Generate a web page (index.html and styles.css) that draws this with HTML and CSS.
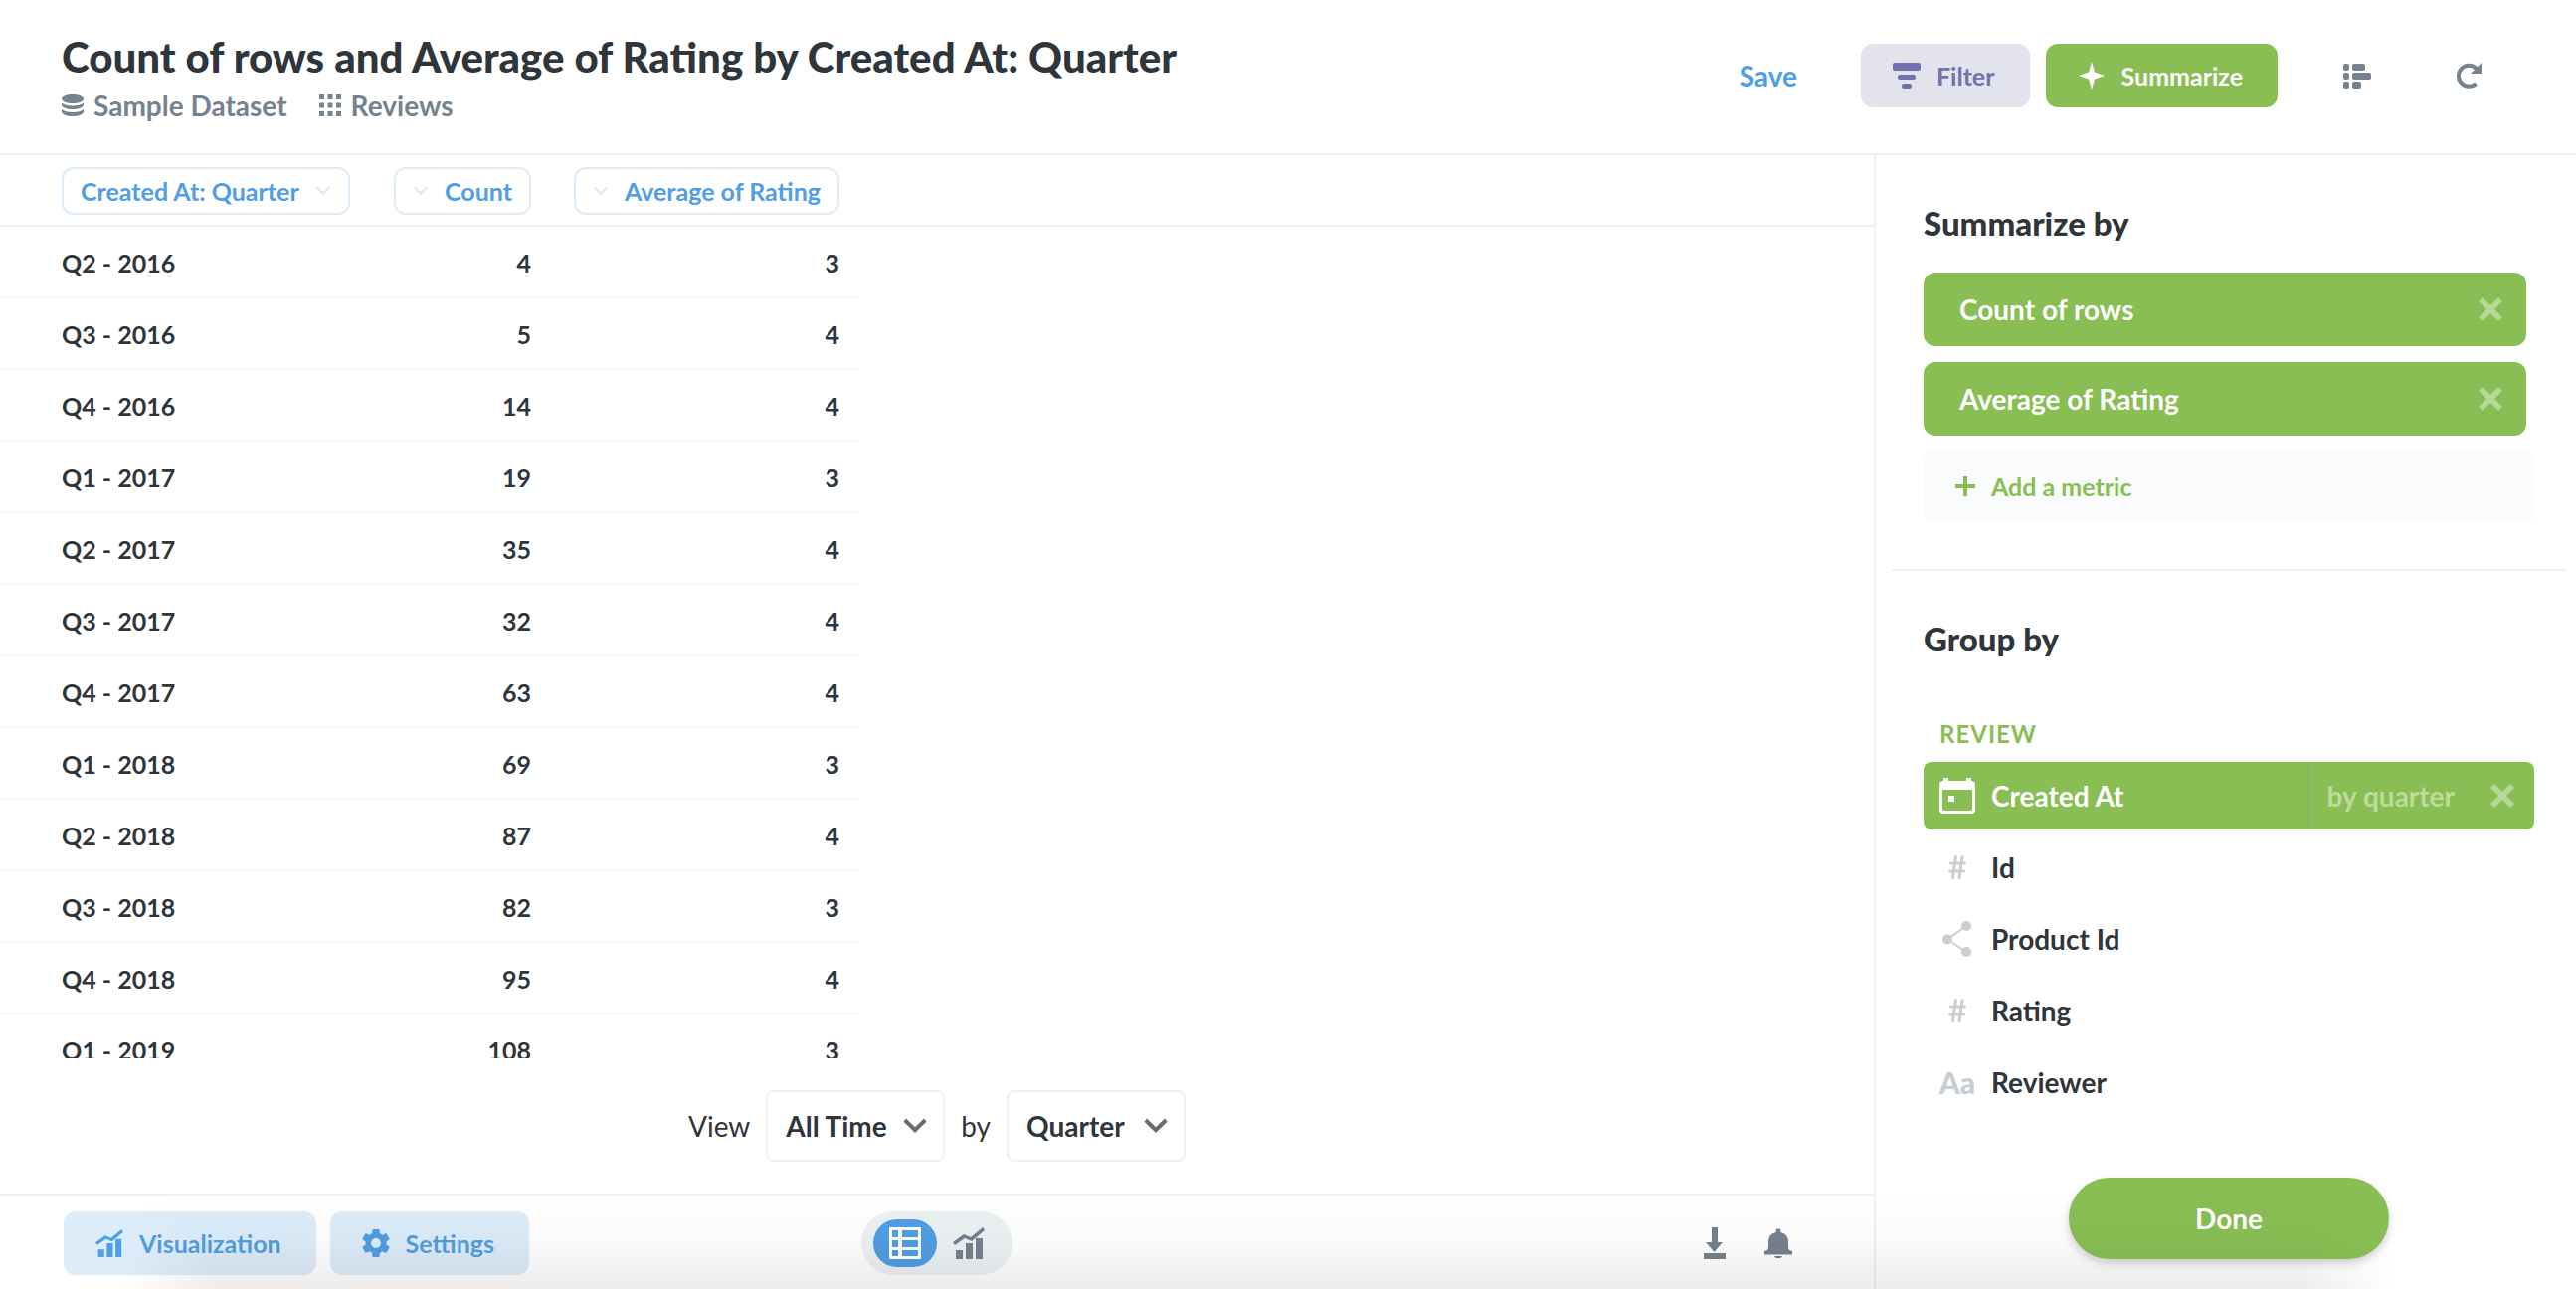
FILE: index.html
```
<!DOCTYPE html>
<html lang="en">
<head>
    <meta charset="UTF-8">
    <meta name="viewport" content="width=device-width, initial-scale=1.0">
    <title>Count of rows and Average of Rating by Created At: Quarter</title>
    <link rel="stylesheet" href="styles.css">
</head>
<body>
    <!-- Shared icons -->
    <svg class="sprite" aria-hidden="true">
        <symbol id="icon-close" viewBox="0 0 24 24">
            <path d="M4 0l8 8 8-8 4 4-8 8 8 8-4 4-8-8-8 8-4-4 8-8-8-8z"/>
        </symbol>
        <symbol id="icon-chevron" viewBox="0 0 24 16">
            <path d="M3 0.5L12 9.2l9-8.7 2.5 3.2L12 15 0.5 3.7z"/>
        </symbol>
        <symbol id="icon-chart" viewBox="0 0 32 32">
            <path d="M3 23h7v9H3zM13 16h7v16h-7zM23 11h7v21h-7z"/>
            <path d="M0 15l11-8 7 3L30 0l2 3-13 11-7-3-10 7z"/>
        </symbol>
        <symbol id="icon-hash" viewBox="0 0 18 24">
            <path d="M7.5 1.5L4.5 22.5M14 1.5l-3 21M2.5 8h14M1.5 16h14" fill="none" stroke="currentColor" stroke-width="3" stroke-linecap="round"/>
        </symbol>
    </svg>

    <header class="header">
        <div>
            <h1 class="title">Count of rows and Average of Rating by Created At: Quarter</h1>
            <div class="breadcrumbs">
                <a href="#database">
                    <svg class="icon-sm" viewBox="0 0 22 22"><path d="M0 4.5C0 2 5 0 11 0s11 2 11 4.5S17 9 11 9 0 7 0 4.5zM0 8.5c2 2 6 3 11 3s9-1 11-3v2c0 2.5-5 4.5-11 4.5S0 13 0 10.5zM0 15c2 2 6 3 11 3s9-1 11-3v2.5c0 2.5-5 4.5-11 4.5S0 20 0 17.5z"/></svg>
                    Sample Dataset
                </a>
                <a href="#table">
                    <svg class="icon-sm" viewBox="0 0 22 22"><path d="M0 0h5v5H0zM8.5 0h5v5h-5zM17 0h5v5h-5zM0 8.5h5v5H0zM8.5 8.5h5v5h-5zM17 8.5h5v5h-5zM0 17h5v5H0zM8.5 17h5v5h-5zM17 17h5v5h-5z"/></svg>
                    Reviews
                </a>
            </div>
        </div>
        <div class="header-actions">
            <button class="btn-save">Save</button>
            <button class="btn btn-filter">
                <svg class="icon" viewBox="0 0 28 28"><rect x="0" y="1" width="28" height="8" rx="2"/><rect x="5" y="13" width="18" height="5" rx="2"/><rect x="9" y="22" width="10" height="5" rx="2"/></svg>
                Filter
            </button>
            <button class="btn btn-summarize">
                <svg class="icon" viewBox="0 0 28 28"><path d="M14 0l3 10.5 10 3.5-10 3.5L14 28l-3-10.5L1 14l10-3.5z"/></svg>
                Summarize
            </button>
            <button class="icon-button" aria-label="Show editor">
                <svg class="icon" viewBox="0 0 28 28"><rect x="0" y="2" width="6" height="7" rx="2"/><rect x="9" y="2" width="13" height="7" rx="2"/><rect x="0" y="11" width="6" height="7" rx="2"/><rect x="9" y="11" width="19" height="7" rx="2"/><rect x="0" y="20" width="6" height="7" rx="2"/><rect x="9" y="20" width="9" height="7" rx="2"/></svg>
            </button>
            <button class="icon-button" aria-label="Refresh">
                <svg class="icon" viewBox="0 0 28 28"><path d="M21.5 22A10.5 10.5 0 1 1 22 7" fill="none" stroke="currentColor" stroke-width="4"/><path d="M27 1v11H16z"/></svg>
            </button>
        </div>
    </header>

    <div class="content">
        <main class="main">
            <div class="table-wrap">
                <table class="results">
                    <thead>
                        <tr>
                            <th class="col-date"><button class="chip">Created At: Quarter <svg class="chip-arrow"><use href="#icon-chevron"/></svg></button></th>
                            <th class="col-count"><button class="chip"><svg class="chip-arrow"><use href="#icon-chevron"/></svg> Count</button></th>
                            <th class="col-avg"><button class="chip"><svg class="chip-arrow"><use href="#icon-chevron"/></svg> Average of Rating</button></th>
                            <th></th>
                        </tr>
                    </thead>
                    <tbody>
                        <tr><td>Q2 - 2016</td><td>4</td><td>3</td></tr>
                        <tr><td>Q3 - 2016</td><td>5</td><td>4</td></tr>
                        <tr><td>Q4 - 2016</td><td>14</td><td>4</td></tr>
                        <tr><td>Q1 - 2017</td><td>19</td><td>3</td></tr>
                        <tr><td>Q2 - 2017</td><td>35</td><td>4</td></tr>
                        <tr><td>Q3 - 2017</td><td>32</td><td>4</td></tr>
                        <tr><td>Q4 - 2017</td><td>63</td><td>4</td></tr>
                        <tr><td>Q1 - 2018</td><td>69</td><td>3</td></tr>
                        <tr><td>Q2 - 2018</td><td>87</td><td>4</td></tr>
                        <tr><td>Q3 - 2018</td><td>82</td><td>3</td></tr>
                        <tr><td>Q4 - 2018</td><td>95</td><td>4</td></tr>
                        <tr><td>Q1 - 2019</td><td>108</td><td>3</td></tr>
                    </tbody>
                </table>
            </div>

            <div class="time-controls">
                <label for="range">View</label>
                <span class="select">
                    <select id="range"><option>All Time</option></select>
                    <svg class="select-arrow"><use href="#icon-chevron"/></svg>
                </span>
                <label for="unit">by</label>
                <span class="select">
                    <select id="unit"><option>Quarter</option></select>
                    <svg class="select-arrow"><use href="#icon-chevron"/></svg>
                </span>
            </div>

            <footer class="footer">
                <div class="footer-left">
                    <button class="btn btn-blue"><svg class="icon"><use href="#icon-chart"/></svg> Visualization</button>
                    <button class="btn btn-blue">
                        <svg class="icon" viewBox="2 2 20 20"><path d="M19.43 12.98c.04-.32.07-.64.07-.98s-.03-.66-.07-.98l2.11-1.65c.19-.15.24-.42.12-.64l-2-3.46c-.12-.22-.39-.3-.61-.22l-2.49 1c-.52-.4-1.08-.73-1.69-.98l-.38-2.65C14.46 2.18 14.25 2 14 2h-4c-.25 0-.46.18-.49.42l-.38 2.65c-.61.25-1.17.59-1.69.98l-2.49-1c-.23-.09-.49 0-.61.22l-2 3.46c-.13.22-.07.49.12.64l2.11 1.65c-.04.32-.07.65-.07.98s.03.66.07.98l-2.11 1.65c-.19.15-.24.42-.12.64l2 3.46c.12.22.39.3.61.22l2.49-1c.52.4 1.08.73 1.69.98l.38 2.65c.03.24.24.42.49.42h4c.25 0 .46-.18.49-.42l.38-2.65c.61-.25 1.17-.59 1.69-.98l2.49 1c.23.09.49 0 .61-.22l2-3.46c.12-.22.07-.49-.12-.64l-2.11-1.65zM12 15.5c-1.93 0-3.5-1.57-3.5-3.5s1.57-3.5 3.5-3.5 3.5 1.57 3.5 3.5-1.57 3.5-3.5 3.5z"/></svg>
                        Settings
                    </button>
                </div>
                <div class="view-toggle">
                    <button class="toggle active" aria-label="Table">
                        <svg class="icon-lg" viewBox="0 0 32 32"><path fill-rule="evenodd" d="M1 0h30a1 1 0 0 1 1 1v30a1 1 0 0 1-1 1H1a1 1 0 0 1-1-1V1a1 1 0 0 1 1-1zM3 3v7h6V3zM13 3v7h16V3zM3 13v7h6v-7zM13 13v7h16v-7zM3 23v6h6v-6zM13 23v6h16v-6z"/></svg>
                    </button>
                    <button class="toggle" aria-label="Chart"><svg class="icon-lg"><use href="#icon-chart"/></svg></button>
                </div>
                <div class="footer-right">
                    <button class="icon-button" aria-label="Download">
                        <svg class="icon-lg" viewBox="0 0 32 32"><path d="M13 0h6v15h5L15.5 25 7 15h6zM5 26h22v6H5z"/></svg>
                    </button>
                    <button class="icon-button" aria-label="Alerts">
                        <svg class="icon-lg" viewBox="0 0 32 32"><path d="M14 5a2.4 2.4 0 1 1 4 0c5 1 8 4 8 10 0 5 0 7 1 8l3 1v3.5H2V24l3-1c1-1 1-3 1-8 0-6 3-9 8-10zM12 29h8c-1 3-7 3-8 0z"/></svg>
                    </button>
                </div>
            </footer>
        </main>

        <aside class="sidebar">
            <h2>Summarize by</h2>
            <div class="metrics">
                <div class="metric">Count of rows <button class="remove" aria-label="Remove Count of rows"><svg><use href="#icon-close"/></svg></button></div>
                <div class="metric">Average of Rating <button class="remove" aria-label="Remove Average of Rating"><svg><use href="#icon-close"/></svg></button></div>
                <button class="add-metric">
                    <svg class="plus" viewBox="0 0 20 20"><path d="M8 0h4v8h8v4h-8v8H8v-8H0V8h8z"/></svg>
                    Add a metric
                </button>
            </div>

            <hr class="divider">

            <h2>Group by</h2>
            <h3>Review</h3>
            <ul class="dimensions">
                <li class="dimension selected">
                    <span class="dimension-icon"><svg class="icon-xl" viewBox="0 0 36 36"><path fill-rule="evenodd" d="M4 0h5v3h18V0h5v3c2.5 0 4 1.5 4 4v25c0 2.5-1.5 4-4 4H4c-2.5 0-4-1.5-4-4V7c0-2.5 1.5-4 4-4zM3 12v19c0 1.5.5 2 2 2h26c1.5 0 2-.5 2-2V12zM9 18h6v6H9z"/></svg></span>
                    <span class="dimension-name">Created At</span>
                    <button class="bucket">by quarter</button>
                    <button class="remove" aria-label="Remove Created At"><svg><use href="#icon-close"/></svg></button>
                </li>
                <li class="dimension">
                    <span class="dimension-icon"><svg class="hash"><use href="#icon-hash"/></svg></span>
                    <span class="dimension-name">Id</span>
                </li>
                <li class="dimension">
                    <span class="dimension-icon"><svg class="icon-xl" viewBox="0 0 36 36"><path d="M27 5L8 18.5 27 31" fill="none" stroke="currentColor" stroke-width="2"/><circle cx="27" cy="5" r="5"/><circle cx="8" cy="18.5" r="5"/><circle cx="27" cy="31" r="5"/></svg></span>
                    <span class="dimension-name">Product Id</span>
                </li>
                <li class="dimension">
                    <span class="dimension-icon"><svg class="hash"><use href="#icon-hash"/></svg></span>
                    <span class="dimension-name">Rating</span>
                </li>
                <li class="dimension">
                    <span class="dimension-icon">Aa</span>
                    <span class="dimension-name">Reviewer</span>
                </li>
            </ul>
            <button class="btn-done">Done</button>
        </aside>
    </div>
</body>
</html>
```
FILE: styles.css
```
:root {
    --text-dark: #2e353b;
    --text-medium: #74838f;
    --text-light: #c7cfd4;
    --brand: #509ee3;
    --brand-light: #ddecf9;
    --green: #89be54;
    --purple: #7172ad;
    --border: #f0f0f0;
}

* {
    margin: 0;
    padding: 0;
    box-sizing: border-box;
}

body {
    display: flex;
    flex-direction: column;
    height: 100vh;
    overflow: hidden;
    font-family: Lato, sans-serif;
    font-size: 28px;
    font-weight: 700;
    color: var(--text-dark);
    background-color: #fff;
}

/* Soft shade along the bottom edge of the window */
body::after {
    content: "";
    position: fixed;
    left: 120px;
    right: 180px;
    bottom: 0;
    height: 96px;
    background: linear-gradient(rgba(0, 0, 0, 0), rgba(0, 0, 0, 0.02) 50%, rgba(0, 0, 0, 0.075));
    -webkit-mask-image: linear-gradient(90deg, transparent, #000 100px, #000 calc(100% - 100px), transparent);
    mask-image: linear-gradient(90deg, transparent, #000 100px, #000 calc(100% - 100px), transparent);
    pointer-events: none;
}

button {
    border: none;
    background: none;
    font: inherit;
    color: inherit;
    cursor: pointer;
}

a {
    color: inherit;
    text-decoration: none;
}

svg {
    display: block;
    flex: none;
    fill: currentColor;
}

.sprite {
    position: absolute;
    width: 0;
    height: 0;
}

.icon-sm {
    width: 22px;
    height: 22px;
}

.icon {
    width: 28px;
    height: 28px;
}

.icon-lg {
    width: 32px;
    height: 32px;
}

.icon-xl {
    width: 36px;
    height: 36px;
}

/* Header */
.header {
    display: flex;
    justify-content: space-between;
    align-items: flex-start;
    padding: 32px 84px 24px 62px;
    border-bottom: 2px solid var(--border);
}

.title {
    font-size: 42px;
    font-weight: 900;
    line-height: 50px;
}

.breadcrumbs {
    display: flex;
    gap: 32px;
    line-height: 48px;
    color: var(--text-medium);
}

.breadcrumbs a {
    display: flex;
    align-items: center;
    gap: 10px;
}

.header-actions {
    display: flex;
    align-items: center;
    gap: 16px;
    padding-top: 12px;
}

.btn-save {
    margin-right: 48px;
    color: var(--brand);
}

.btn {
    display: flex;
    align-items: center;
    gap: 16px;
    height: 64px;
    padding: 0 35px 0 32px;
    border-radius: 12px;
    font-size: 25px;
}

.btn-filter {
    background-color: #e3e3ee;
    color: var(--purple);
}

.btn-summarize {
    margin-right: 40px;
    background-color: var(--green);
    color: #fff;
}

.icon-button {
    display: flex;
    justify-content: center;
    align-items: center;
    width: 48px;
    height: 48px;
    color: var(--text-medium);
}

.header-actions .icon-button + .icon-button {
    margin-left: 48px;
}

/* Page body */
.content {
    display: flex;
    flex: 1;
    min-height: 0;
}

.main {
    display: flex;
    flex: 1;
    flex-direction: column;
    min-width: 0;
}

.table-wrap {
    flex: 1;
    min-height: 0;
    overflow: hidden;
}

.results {
    width: 100%;
    table-layout: fixed;
    border-collapse: separate;
    border-spacing: 0;
    font-size: 25px;
}

.results th {
    height: 72px;
    padding: 2px 20px 0 0;
    border-bottom: 2px solid var(--border);
    text-align: right;
}

.results td {
    height: 72px;
    padding: 2px 20px 0 0;
    border-bottom: 2px solid #fafafa;
    text-align: right;
}

.results th:first-child,
.results td:first-child {
    padding-left: 62px;
    text-align: left;
}

.col-date {
    width: 374px;
}

.col-count {
    width: 180px;
}

.col-avg {
    width: 310px;
}

.chip {
    display: inline-flex;
    align-items: center;
    gap: 16px;
    height: 48px;
    padding: 0 17px;
    border: 2px solid var(--brand-light);
    border-radius: 12px;
    color: var(--brand);
    white-space: nowrap;
}

.chip-arrow {
    width: 16px;
    height: 10px;
    color: var(--brand-light);
}

/* Time range controls */
.time-controls {
    display: flex;
    justify-content: center;
    align-items: center;
    gap: 16px;
    padding: 32px 0;
    font-weight: 400;
}

.select {
    position: relative;
}

.select select {
    display: block;
    width: 180px;
    height: 72px;
    padding: 0 18px;
    border: 2px solid var(--border);
    border-radius: 8px;
    background-color: #fff;
    color: inherit;
    font: inherit;
    font-weight: 700;
    appearance: none;
}

.select-arrow {
    position: absolute;
    top: 28px;
    right: 18px;
    width: 24px;
    height: 16px;
    color: #676c71;
    pointer-events: none;
}

/* Footer */
.footer {
    display: grid;
    grid-template-columns: 1fr auto 1fr;
    align-items: center;
    padding: 16px 64px 14px;
    border-top: 2px solid var(--border);
}

.footer-left {
    display: flex;
    gap: 14px;
}

.btn-blue {
    background-color: var(--brand-light);
    color: var(--brand);
}

.view-toggle {
    display: flex;
    align-items: center;
    height: 64px;
    padding: 0 12px;
    border-radius: 32px;
    background-color: #ecf1f4;
    color: var(--text-medium);
}

.toggle {
    display: flex;
    justify-content: center;
    align-items: center;
    width: 64px;
    height: 48px;
    border-radius: 24px;
}

.toggle.active {
    background-color: var(--brand);
    color: #fff;
}

.footer-right {
    display: flex;
    justify-content: flex-end;
    gap: 16px;
    padding-right: 8px;
}

/* Summarize sidebar */
.sidebar {
    display: flex;
    flex-direction: column;
    width: 706px;
    padding: 48px 42px 30px 48px;
    border-left: 2px solid var(--border);
}

.sidebar h2 {
    font-size: 33px;
    font-weight: 900;
    line-height: 40px;
}

.sidebar h3 {
    margin: 60px 0 12px;
    padding-left: 16px;
    font-size: 24px;
    line-height: 32px;
    letter-spacing: 1px;
    text-transform: uppercase;
    color: var(--green);
}

.metrics {
    display: flex;
    flex-direction: column;
    gap: 16px;
    margin-top: 30px;
}

.metric {
    display: flex;
    justify-content: space-between;
    align-items: center;
    height: 74px;
    margin-right: 8px;
    padding: 0 24px 0 36px;
    border-radius: 12px;
    background-color: var(--green);
    color: #fff;
}

.remove {
    opacity: 0.4;
}

.remove svg {
    width: 24px;
    height: 24px;
}

.add-metric {
    display: flex;
    align-items: center;
    gap: 16px;
    height: 70px;
    padding: 0 32px;
    border-radius: 8px;
    background-color: #f9fbfc;
    color: var(--green);
    font-size: 25px;
}

.plus {
    width: 20px;
    height: 20px;
}

.divider {
    margin: 48px -32px;
    border: none;
    border-top: 2px solid var(--border);
}

.dimensions {
    display: flex;
    flex-direction: column;
    gap: 4px;
    list-style: none;
}

.dimension {
    display: flex;
    align-items: center;
    height: 68px;
    padding: 0 20px 0 16px;
    border-radius: 8px;
}

.dimension-icon {
    display: flex;
    justify-content: center;
    width: 36px;
    margin-right: 16px;
    color: var(--text-light);
    font-size: 30px;
    font-weight: 900;
    line-height: 36px;
}

.dimension-name {
    flex: 1;
}

.hash {
    width: 18px;
    height: 24px;
}

.dimension.selected {
    background-color: var(--green);
    color: #fff;
}

.selected .dimension-icon {
    color: #fff;
}

.bucket {
    align-self: stretch;
    margin-right: 36px;
    padding-left: 18px;
    border-left: 2px solid rgba(116, 131, 143, 0.2);
    color: #bddb9c;
}

.btn-done {
    align-self: center;
    width: 322px;
    height: 82px;
    margin-top: auto;
    border-radius: 41px;
    background-color: var(--green);
    color: #fff;
    box-shadow: 0 4px 10px rgba(0, 0, 0, 0.18);
}
```
